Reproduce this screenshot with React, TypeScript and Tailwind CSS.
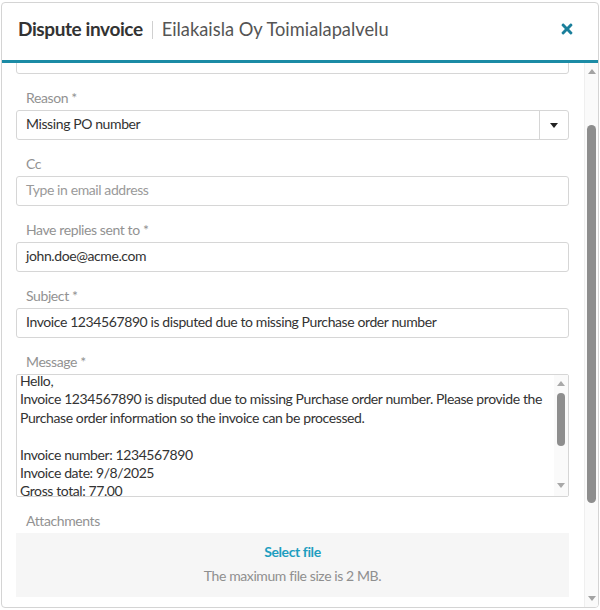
import { FaTimes } from "react-icons/fa";

const message = [
  "Hello,",
  "Invoice 1234567890 is disputed due to missing Purchase order number. Please provide the",
  "Purchase order information so the invoice can be processed.",
  "",
  "Invoice number: 1234567890",
  "Invoice date: 9/8/2025",
  "Gross total: 77.00",
];

function Label({ children }: { children: string }) {
  return (
    <div className="mt-[14px] h-5 pl-[10px] text-[14px] leading-[19px] text-[#929292]">
      {children}
    </div>
  );
}

function Field({
  label,
  value,
  placeholder,
}: {
  label: string;
  value?: string;
  placeholder?: string;
}) {
  return (
    <div>
      <Label>{label}</Label>
      <div className="mt-[2px] flex h-[30px] items-center rounded-[3px] border border-[#d6d6d6] bg-white pb-[4px] pl-[9px] text-[14px]">
        {value ? (
          <span className="text-[#333]">{value}</span>
        ) : (
          <span className="text-[#9a9a9a]">{placeholder}</span>
        )}
      </div>
    </div>
  );
}

function Arrow({ up, className }: { up?: boolean; className?: string }) {
  return (
    <svg width="8" height="5" viewBox="0 0 8 5" className={className}>
      <path d={up ? "M0 5 L4 0 L8 5 Z" : "M0 0 L4 5 L8 0 Z"} fill="currentColor" />
    </svg>
  );
}

export default function App() {
  return (
    <div className="h-[610px] w-[600px] bg-white pl-px pt-[2px] font-['Lato',sans-serif] tracking-[-0.4px]">
      <div className="flex h-[606px] w-[598px] flex-col overflow-hidden rounded-[4px] border border-[#d4d4d4]">
        {/* Header */}
        <div className="flex h-[60px] shrink-0 items-center border-b-[3px] border-[#1b8ba5] pb-[4px] pl-[16px] pr-[23px]">
          <h2 className="text-[19px] font-bold text-[#333]">Dispute invoice</h2>
          <span className="mx-[9px] h-[18px] w-px bg-[#d0d0d0]" />
          <span className="text-[18.3px] tracking-normal text-[#555]">
            Eilakaisla Oy Toimialapalvelu
          </span>
          <button className="ml-auto mb-[2px] text-[#1a7f9b]">
            <FaTimes size={16} />
          </button>
        </div>

        {/* Body */}
        <div className="flex min-h-0 flex-1">
          <div className="w-[567px] overflow-hidden pl-[14px]">
            <div className="-mt-[19px]">
              <div className="h-[30px] rounded-[3px] border border-[#d6d6d6]" />

              <Label>Reason *</Label>
              <div className="mt-[2px] flex h-[30px] items-center rounded-[3px] border border-[#d6d6d6] text-[14px] text-[#333]">
                <span className="flex-1 pb-[3px] pl-[9px]">Missing PO number</span>
                <span className="flex h-full w-[29px] items-center justify-center border-l border-[#d6d6d6] text-[#222]">
                  <Arrow />
                </span>
              </div>

              <Field label="Cc" placeholder="Type in email address" />
              <Field label="Have replies sent to *" value="john.doe@acme.com" />
              <Field
                label="Subject *"
                value="Invoice 1234567890 is disputed due to missing Purchase order number"
              />

              <Label>Message *</Label>
              <div className="mt-[2px] flex h-[123px] overflow-hidden rounded-[2px] border border-[#d6d6d6]">
                <div className="flex-1 overflow-hidden pl-[3px]">
                  <div className="-mt-[3px] text-[14px] leading-[18.4px] text-[#333]">
                    {message.map((line, i) => (
                      <div key={i} className="h-[18.4px] whitespace-nowrap">
                        {line}
                      </div>
                    ))}
                  </div>
                </div>
                <div className="flex w-[14px] flex-col items-center bg-[#fafafa] text-[#a8a8a8]">
                  <Arrow up className="mt-[6px]" />
                  <div className="mt-[7px] h-[53px] w-[8px] rounded-full bg-[#8e8e8e]" />
                  <Arrow className="mt-auto mb-[8px]" />
                </div>
              </div>

              <Label>Attachments</Label>
              <div className="mt-[2px] flex h-[64px] flex-col items-center bg-[#f6f6f6] pt-[7px] text-[14px] leading-6">
                <span className="font-bold text-[#1e9ec0]">Select file</span>
                <span className="text-[#8f8f8f]">The maximum file size is 2 MB.</span>
              </div>
            </div>
          </div>

          <div className="flex-1" />

          {/* Scrollbar */}
          <div className="flex w-[14px] flex-col items-center border-l border-[#efefef] bg-[#fafafa] text-[#a3a3a3]">
            <Arrow up className="mt-[6px]" />
            <div className="mt-[51px] h-[378px] w-[9px] rounded-full bg-[#8d8d8d]" />
            <Arrow className="mt-auto mb-[6px]" />
          </div>
        </div>
      </div>
    </div>
  );
}
